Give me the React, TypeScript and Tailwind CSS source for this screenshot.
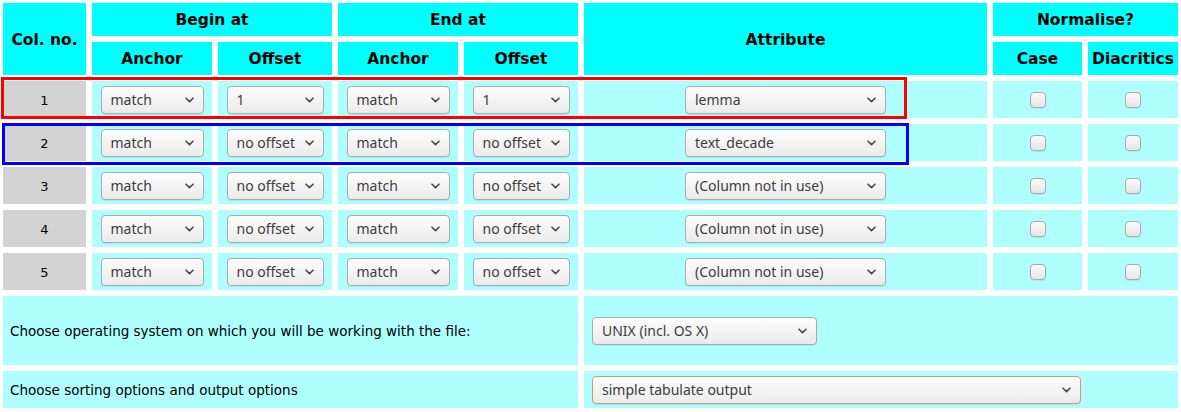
import React from "react";

const Chevron = () => (
  <svg width="9" height="6" viewBox="0 0 9 6" className="shrink-0">
    <path d="M1 1.2 L4.5 4.6 L8 1.2" fill="none" stroke="#4a4a4a" strokeWidth="1.6" strokeLinecap="round" strokeLinejoin="round" />
  </svg>
);

const Sel = ({ value, w, orange }: { value: string; w: string; orange?: boolean }) => (
  <div
    className={`${w} h-[28px] flex items-center justify-between pl-[9px] pr-[9px] rounded-[4px] border ${
      orange ? "border-[#d9957a]" : "border-[#ababab]"
    } bg-gradient-to-b from-[#fdfdfd] to-[#ebebeb] shadow-[0_1px_1px_rgba(0,0,0,0.08)] text-[14px] text-[#3c3c3c] whitespace-nowrap`}
    style={{ fontFamily: '"Noto Sans", "Open Sans", sans-serif' }}
  >
    <span>{value}</span>
    <Chevron />
  </div>
);

const Check = () => (
  <div className="w-[16px] h-[16px] rounded-[4px] border border-[#a9a9a9] bg-gradient-to-b from-[#fbfbfb] to-[#e6e6e6] shadow-[0_1px_1px_rgba(0,0,0,0.08)]" />
);

const H = ({ children, className = "" }: { children: React.ReactNode; className?: string }) => (
  <div className={`bg-[#00ffff] flex items-center justify-center pt-[3px] font-bold text-[15.5px] text-black ${className}`}>
    {children}
  </div>
);

const D = ({ children, className = "" }: { children: React.ReactNode; className?: string }) => (
  <div className={`bg-[#afffff] flex items-center justify-center ${className}`}>{children}</div>
);

const rows = [
  { n: 1, o: "1", a: "lemma" },
  { n: 2, o: "no offset", a: "text_decade" },
  { n: 3, o: "no offset", a: "(Column not in use)" },
  { n: 4, o: "no offset", a: "(Column not in use)" },
  { n: 5, o: "no offset", a: "(Column not in use)" },
];

export default function App() {
  return (
    <div
      className="relative w-[1181px] h-[412px] bg-white pt-[3px] pl-[3px] flex flex-col gap-[6px]"
      style={{ fontFamily: '"DejaVu Sans", Verdana, sans-serif' }}
    >
      <div className="grid grid-cols-[83px_120px_114px_120px_114px_403px_89px_90px] grid-rows-[33px_33px_37px_37px_37px_37px_37px] gap-x-[6px] gap-y-[6px]">
        <H className="row-span-2">Col. no.</H>
        <H className="col-span-2">Begin at</H>
        <H className="col-span-2">End at</H>
        <H className="row-span-2">Attribute</H>
        <H className="col-span-2">Normalise?</H>
        <H>Anchor</H>
        <H>Offset</H>
        <H>Anchor</H>
        <H>Offset</H>
        <H>Case</H>
        <H>Diacritics</H>
        {rows.map((r) => (
          <React.Fragment key={r.n}>
            <div className="bg-[#d3d3d3] flex items-center justify-center pt-[2px] text-[13px] text-black">{r.n}</div>
            <D>
              <Sel value="match" w="w-[103px]" />
            </D>
            <D>
              <Sel value={r.o} w="w-[97px]" />
            </D>
            <D>
              <Sel value="match" w="w-[103px]" />
            </D>
            <D>
              <Sel value={r.o} w="w-[97px]" />
            </D>
            <D>
              <Sel value={r.a} w="w-[201px]" />
            </D>
            <D>
              <Check />
            </D>
            <D>
              <Check />
            </D>
          </React.Fragment>
        ))}
      </div>
      <div className="grid grid-cols-[575px_594px] grid-rows-[69px_37px] gap-[6px]">
        <div className="bg-[#afffff] flex items-center pl-[7px] pt-[2px] text-[13.5px] text-black">
          Choose operating system on which you will be working with the file:
        </div>
        <div className="bg-[#afffff] flex items-center pl-[8px]">
          <Sel value="UNIX (incl. OS X)" w="w-[225px]" />
        </div>
        <div className="bg-[#afffff] flex items-center pl-[7px] pt-[2px] text-[13.5px] text-black">
          Choose sorting options and output options
        </div>
        <div className="bg-[#afffff] flex items-center pl-[8px]">
          <Sel value="simple tabulate output" w="w-[489px]" orange />
        </div>
      </div>
      <div className="absolute left-[1px] top-[77px] w-[906px] h-[42px] border-[3px] border-[#ff0000] pointer-events-none" />
      <div className="absolute left-[2px] top-[123px] w-[907px] h-[42px] border-[3px] border-[#0000ff] pointer-events-none" />
    </div>
  );
}
